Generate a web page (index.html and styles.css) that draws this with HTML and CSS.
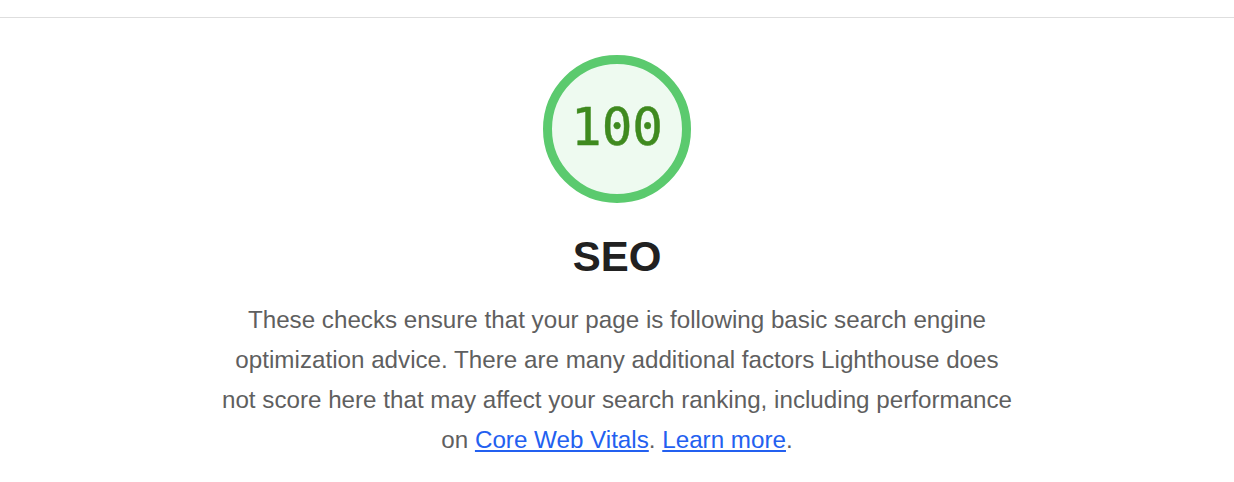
FILE: index.html
```html
<!DOCTYPE html>
<html>
<head>
<meta charset="utf-8">
<link rel="stylesheet" href="styles.css">
</head>
<body>
<div class="topbar"></div>
<section class="category">
  <div class="gauge">
    <svg class="gauge-svg" width="148" height="148" viewBox="0 0 148 148">
      <circle cx="74" cy="74" r="69.5" fill="#eefaf0" stroke="#5bca6e" stroke-width="9"/>
    </svg>
    <div class="gauge-value">100</div>
  </div>
  <h2 class="title">SEO</h2>
  <p class="description">These checks ensure that your page is following basic search engine<br>optimization advice. There are many additional factors Lighthouse does<br>not score here that may affect your search ranking, including performance<br>on <a href="#">Core Web Vitals</a>. <a href="#">Learn more</a>.</p>
</section>
</body>
</html>
```

FILE: styles.css
```css
html, body {
  margin: 0;
  padding: 0;
  background: #ffffff;
}
body {
  font-family: "Liberation Sans", Arial, sans-serif;
}
.topbar {
  height: 17px;
  border-bottom: 1px solid #dedede;
}
.category {
  display: flex;
  flex-direction: column;
  align-items: center;
  padding-top: 37px;
}
.gauge {
  position: relative;
  width: 148px;
  height: 148px;
}
.gauge-svg {
  display: block;
}
.gauge-value {
  position: absolute;
  inset: 0;
  display: flex;
  align-items: center;
  justify-content: center;
  font-family: "DejaVu Sans Mono", "Liberation Mono", monospace;
  font-size: 51px;
  color: #3f8a1f;
  padding-bottom: 3px;
  -webkit-text-stroke: 0.4px #3f8a1f;
}
.title {
  margin: 29px 0 0;
  font-size: 42px;
  line-height: 50px;
  font-weight: bold;
  color: #212121;
}
.description {
  margin: 18px 0 0;
  font-size: 24.2px;
  line-height: 40px;
  color: #5f5f5f;
  text-align: center;
}
.description a {
  color: #2360f0;
  text-decoration: underline;
}
```
